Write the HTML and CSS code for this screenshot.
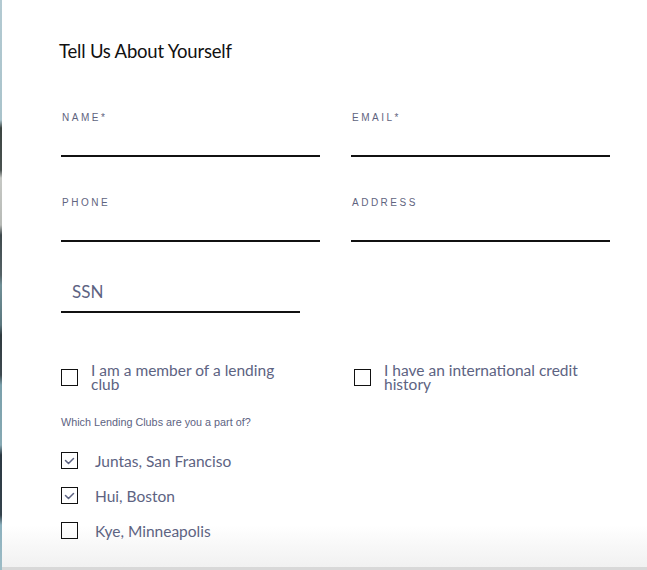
FILE: index.html
```html
<!DOCTYPE html>
<html lang="en">
<head>
<meta charset="utf-8">
<title>Tell Us About Yourself</title>
<link rel="stylesheet" href="styles.css">
</head>
<body>
<div class="page">
  <div class="edge"></div>
  <main class="panel">
    <h1 class="title">Tell Us About Yourself</h1>
    <div class="fields">
      <div class="field"><label class="label">NAME*</label><div class="line"></div></div>
      <div class="field"><label class="label">EMAIL*</label><div class="line"></div></div>
      <div class="field"><label class="label">PHONE</label><div class="line"></div></div>
      <div class="field"><label class="label">ADDRESS</label><div class="line"></div></div>
    </div>
    <div class="ssn"><span class="ssn-text">SSN</span></div>
    <div class="opts">
      <div class="opt">
        <span class="box"></span>
        <span class="opt-text">I am a member of a lending club</span>
      </div>
      <div class="opt opt-right">
        <span class="box"></span>
        <span class="opt-text">I have an international credit history</span>
      </div>
    </div>
    <p class="question">Which Lending Clubs are you a part of?</p>
    <ul class="clubs">
      <li class="club">
        <span class="box"><svg class="check" viewBox="1.5 1.5 14 14"><path d="M5 9 L8 12 L13 7" /></svg></span>
        <span class="club-text">Juntas, San Franciso</span>
      </li>
      <li class="club">
        <span class="box"><svg class="check" viewBox="1.5 1.5 14 14"><path d="M5 9 L8 12 L13 7" /></svg></span>
        <span class="club-text">Hui, Boston</span>
      </li>
      <li class="club">
        <span class="box"></span>
        <span class="club-text">Kye, Minneapolis</span>
      </li>
    </ul>
  </main>
</div>
</body>
</html>
```

FILE: styles.css
```css
html, body {
  margin: 0;
  padding: 0;
  background: #ffffff;
}

.page {
  display: flex;
  height: 570px;
  overflow: hidden;
}

.edge {
  width: 2px;
  flex: none;
  background: linear-gradient(to bottom,
    #b3cad2 0px, #a9c3cb 120px,
    #3c4542 128px, #4a5250 170px,
    #c6c8c4 178px, #b7bab6 225px,
    #3f4a4d 235px, #556266 275px,
    #6f8f96 285px, #5b777e 325px,
    #2f3a3f 335px, #3e4a50 375px,
    #7aa0ab 385px, #86a9b3 445px,
    #2b3842 455px, #34424c 515px,
    #8bb0bd 525px, #9dbcc6 570px);
}

.panel {
  flex: 1;
  box-sizing: border-box;
  padding: 39px 37px 0 59px;
  background: linear-gradient(to bottom,
    #ffffff 0, #ffffff 525px, #f1f1f1 567px, #d8d8d8 567px, #d8d8d8 570px);
}

.title {
  margin: 0 0 0 -2px;
  font-family: "Lato", "Liberation Sans", sans-serif;
  font-weight: 400;
  font-size: 18.5px;
  line-height: 24px;
  color: #111111;
  letter-spacing: -0.2px;
}

.fields {
  margin-top: 48px;
  display: grid;
  grid-template-columns: 259px 259px;
  column-gap: 31px;
  row-gap: 39px;
}

.field {
  display: flex;
  flex-direction: column;
}

.label {
  padding-left: 1px;
  height: 14px;
  font-family: "Liberation Sans", Arial, sans-serif;
  font-size: 10px;
  line-height: 14px;
  letter-spacing: 2.5px;
  color: #5f6480;
}

.line {
  margin-top: 30px;
  border-bottom: 2px solid #111111;
}

.ssn {
  margin-top: 40px;
  width: 239px;
  box-sizing: border-box;
  padding: 0 0 9px 11px;
  border-bottom: 2px solid #111111;
}

.ssn-text {
  display: block;
  font-family: "Lato", "Liberation Sans", sans-serif;
  font-size: 17px;
  line-height: 20px;
  color: #5d6382;
}

.opts {
  margin-top: 50px;
  display: grid;
  grid-template-columns: 259px 259px;
  column-gap: 31px;
}

.opt {
  display: flex;
  align-items: center;
  gap: 13px;
}

.opt-right {
  padding-left: 3px;
}

.box {
  flex: none;
  width: 17px;
  height: 17px;
  box-sizing: border-box;
  border: 1.5px solid #111111;
  display: block;
}

.check {
  display: block;
  width: 14px;
  height: 14px;
  fill: none;
  stroke: #5d6382;
  stroke-width: 1.5;
  stroke-linecap: round;
  stroke-linejoin: round;
}

.opt-text {
  max-width: 215px;
  font-family: "Lato", "Liberation Sans", sans-serif;
  font-size: 15.5px;
  line-height: 14px;
  color: #5d6382;
}

.question {
  margin: 25px 0 0 0;
  font-family: "Liberation Sans", Arial, sans-serif;
  font-size: 10.8px;
  line-height: 13px;
  color: #5d6382;
}

.clubs {
  list-style: none;
  margin: 23px 0 0 0;
  padding: 0;
  display: flex;
  flex-direction: column;
  gap: 18px;
}

.club {
  display: flex;
  align-items: center;
  gap: 17px;
  height: 17px;
}

.club-text {
  font-family: "Lato", "Liberation Sans", sans-serif;
  font-size: 15.5px;
  line-height: 20px;
  color: #5d6382;
}
```
